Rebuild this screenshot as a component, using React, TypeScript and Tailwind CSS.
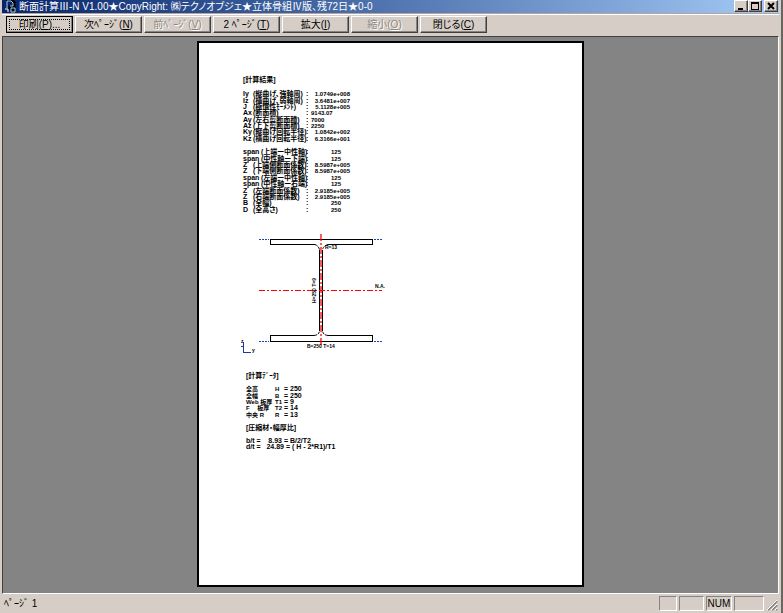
import type { ReactNode } from 'react';

type Result = [name: string, label: string, value: string, align?: 'left' | 'mid'];

const SECTION: Result[] = [
  ['Iy', '(縦曲げ、強軸周)', '1.0749e+008'],
  ['Iz', '(横曲げ、弱軸周)', '3.6481e+007'],
  ['J', '(極慣性ﾓｰﾒﾝﾄ)', '5.1128e+005'],
  ['Ax', '(断面積)', '9143.07', 'left'],
  ['Ay', '(左右剪断面積)', '7000', 'left'],
  ['Az', '(上下剪断面積)', '2250', 'left'],
  ['Ky', '(縦曲げ回転半径)', '1.0842e+002'],
  ['Kz', '(横曲げ回転半径)', '6.3166e+001'],
];

const MODULUS: Result[] = [
  ['span', '(上端ー中性軸)', '125', 'mid'],
  ['span', '(中性軸ー下端)', '125', 'mid'],
  ['Z', '(上端側断面係数)', '8.5987e+005'],
  ['Z', '(下端側断面係数)', '8.5987e+005'],
  ['span', '(左端ー中性軸)', '125', 'mid'],
  ['span', '(中性軸ー右端)', '125', 'mid'],
  ['Z', '(左端断面係数)', '2.9185e+005'],
  ['Z', '(右端断面係数)', '2.9185e+005'],
  ['B', '(全幅)', '250', 'mid'],
  ['D', '(全高さ)', '250', 'mid'],
];

const INPUTS = [
  ['全高', 'H', '= 250'],
  ['全幅', 'B', '= 250'],
  ['Web 板厚', 'T1', '= 9'],
  ['F　 板厚', 'T2', '= 14'],
  ['中央 R', 'R', '= 13'],
];

const TOOLS = [
  { text: '印刷', k: 'P', tail: '...', focus: true },
  { text: '次ﾍﾟｰｼﾞ', k: 'N' },
  { text: '前ﾍﾟｰｼﾞ', k: 'V', off: true },
  { text: '2 ﾍﾟｰｼﾞ', k: 'T' },
  { text: '拡大', k: 'I' },
  { text: '縮小', k: 'O', off: true },
  { text: '閉じる', k: 'C' },
];

const raised = 'border border-t-white border-l-white border-r-[#404040] border-b-[#404040] shadow-[inset_-1px_-1px_0_#848484]';

function ToolButton({ text, k, tail, focus, off }: { text: string; k: string; tail?: string; focus?: boolean; off?: boolean }) {
  return (
    <button
      disabled={off}
      className={`relative h-[17px] w-[67px] whitespace-nowrap text-[10px] leading-[14px] ${raised} ${focus ? 'outline outline-black -outline-offset-1' : ''} ${off ? 'text-[#8c8680] [text-shadow:1px_1px_0_#fff]' : 'text-black'}`}
    >
      {text}(<u className="underline-offset-1">{k}</u>){tail}
      {focus && <span className="absolute inset-[2px] border border-dotted border-black" />}
    </button>
  );
}

function CaptionButton({ label, children }: { label: string; children: ReactNode }) {
  return (
    <button aria-label={label} className={`flex h-3 w-[14px] items-center justify-center bg-[#d6cec6] ${raised}`}>
      <svg width="8" height="8" viewBox="0 0 8 8" fill="none" stroke="#000" shapeRendering="crispEdges">{children}</svg>
    </button>
  );
}

function ResultTable({ rows, height }: { rows: Result[]; height: string }) {
  return (
    <table className={`w-[108px] table-fixed border-collapse ${height}`}>
      <colgroup>
        <col className="w-[10px]" />
        <col className="w-[52px]" />
        <col className="w-[6px]" />
        <col className="w-[40px]" />
      </colgroup>
      <tbody>
        {rows.map(([name, label, value, align], i) => (
          <tr key={i}>
            <td className="p-0">{name}</td>
            <td className={name === 'span' ? 'p-0 pl-2' : 'p-0'}>{label}</td>
            <td className="p-0 pl-[1px]">:</td>
            <td className={`text-[6px] ${align === 'left' ? 'p-0' : align === 'mid' ? 'p-0 pr-[10px] text-right' : 'p-0 pr-[1px] text-right'}`}>{value}</td>
          </tr>
        ))}
      </tbody>
    </table>
  );
}

/** H-shaped steel section with centre lines and dimension texts. */
function SectionDrawing() {
  return (
    <svg width="154" height="126" viewBox="236 230 154 126" fill="none" className="block">
      <g stroke="#000" shapeRendering="crispEdges">
        <path d="M270.5 244.5V239.5H372.5V244.5M372.5 244.5H328M270.5 244.5H315" />
        <path d="M270.5 341.5V335.5H314M328 335.5H372.5V341.5H270.5" />
        <path d="M319.5 250V331M322.5 250V331" />
      </g>
      <path d="M315 244.5Q319 246 319.5 250M328 244.5Q323 246 322.5 250M314 335.5Q319 335 319.5 331M328 335.5Q323 335 322.5 331" stroke="#000" strokeDasharray="3 1" />
      <g stroke="#1048c8" strokeDasharray="2 1" shapeRendering="crispEdges">
        <path d="M259 239.5H269M374 239.5H383M259 341.5H269M374 341.5H383" />
      </g>
      <g stroke="#f00" shapeRendering="crispEdges">
        <path d="M259 290.5H382" strokeDasharray="6 2 2 2" />
        <path d="M321 234V345" strokeDasharray="7 2 2 2" strokeWidth="2" strokeOpacity=".65" />
      </g>
      <g stroke="#2238a0" shapeRendering="crispEdges">
        <path d="M243.5 342V352.5H251" />
        <path d="M241 346.5H244" />
      </g>
      <g fill="#000" fontSize="5">
        <text x="241" y="343">z</text>
        <text x="252" y="352">y</text>
        <text x="325" y="249">R=13</text>
        <text x="375" y="288">N.A.</text>
        <text x="307" y="348">B=250 T=14</text>
        <text transform="translate(316 303) rotate(-90)">H=250 T=9</text>
      </g>
    </svg>
  );
}

export default function App() {
  const pane = 'h-[15px] border border-t-[#848484] border-l-[#848484] border-r-white border-b-white';
  return (
    <div className="flex h-screen flex-col overflow-hidden border-r-2 border-[#6b6560] bg-[#d6cec6] font-['Liberation_Sans','Noto_Sans_CJK_JP',sans-serif] text-[10px] text-black [font-feature-settings:'palt']">
      <header className="mx-[2px] flex h-[14px] shrink-0 items-start justify-between border-b border-[#b5a59c] bg-linear-to-r from-[#08246b] to-[#a5cbf7]">
        <div className="flex items-start gap-[2px] text-white">
          <svg width="15" height="13" viewBox="0 0 15 13" fill="none" className="shrink-0">
            <path d="M4 0H9L12 2V7H8V10" stroke="#000" strokeWidth="3" />
            <path d="M5 8V1H9L11 3V6H8" stroke="#9fd0f0" />
            <path d="M9 8H13V12H9z" fill="#000" stroke="#9fd0f0" />
            <path d="M3 9H6V12" stroke="#fff" />
          </svg>
          <h1 className="whitespace-nowrap leading-[13px]">断面計算Ⅲ-N V1.00★CopyRight: ㈱テクノオブジェ★立体骨組Ⅳ版、残72日★0-0</h1>
        </div>
        <div className="flex pr-[1px]">
          <CaptionButton label="最小化"><path d="M1 6.5H6M1 7.5H6" /></CaptionButton>
          <CaptionButton label="最大化"><path d="M.5 .5H7.5V7.5H.5zM0 1.5H8" /></CaptionButton>
          <span className="w-[2px]" />
          <CaptionButton label="閉じる"><path d="M1 1L7 7M7 1L1 7" strokeWidth="2" shapeRendering="auto" /></CaptionButton>
        </div>
      </header>

      <nav className="mx-[2px] flex h-[22px] shrink-0 items-start gap-[2px] border-t border-white pl-1 pt-[1px]">
        {TOOLS.map((b) => <ToolButton key={b.text} {...b} />)}
      </nav>

      <main className="mx-[2px] flex min-h-0 flex-1 justify-center border border-t-[#424142] border-l-[#424142] border-r-white border-b-white bg-[#848484] pb-[6px] pt-1">
        <article className="aspect-[387/546] h-full whitespace-nowrap border-2 border-black bg-white pl-11 pt-[34px] text-[7px] font-bold leading-[6px]">
          <h2 className="mb-2">[計算結果]</h2>
          <ResultTable rows={SECTION} height="h-[51px]" />
          <div className="h-[7px]" />
          <ResultTable rows={MODULUS} height="h-[64px]" />
          <div className="-ml-[7px] mt-[17px]"><SectionDrawing /></div>

          <div className="pl-[3px] pt-[17px]">
            <h2 className="mb-[7px]">[計算ﾃﾞｰﾀ]</h2>
            <table className="h-8 w-[64px] table-fixed border-collapse">
              <colgroup>
                <col className="w-[29px]" />
                <col className="w-[9px]" />
                <col className="w-[26px]" />
              </colgroup>
              <tbody>
                {INPUTS.map(([label, sym, value]) => (
                  <tr key={label}>
                    <td className="p-0 text-[6px]">{label}</td>
                    <td className="p-0 text-[6px]">{sym}</td>
                    <td className="p-0">{value}</td>
                  </tr>
                ))}
              </tbody>
            </table>
            <h2 className="my-[7px]">[圧縮材・幅厚比]</h2>
            <p className="whitespace-pre">{'b/t =    8.93 = B/2/T2'}</p>
            <p className="whitespace-pre">{'d/t =   24.89 = ( H - 2*R1)/T1'}</p>
          </div>
        </article>
      </main>

      <footer className="mx-[2px] flex h-[19px] shrink-0 items-center gap-[2px] pl-[2px]">
        <span className="flex-1">ﾍﾟｰｼﾞ 1</span>
        <span className={`w-[18px] ${pane}`} />
        <span className={`w-[25px] ${pane}`} />
        <span className={`w-[26px] text-center leading-[13px] ${pane}`}>NUM</span>
        <span className={`w-[30px] ${pane}`} />
        <svg width="13" height="16" viewBox="1 0 13 16">
          <path d="M3 14L12 5M7 14L12 9M11 14L12 13" stroke="#848484" strokeWidth="2" />
          <path d="M2 14L12 4M6 14L12 8M10 14L12 12" stroke="#fff" />
        </svg>
      </footer>
    </div>
  );
}
